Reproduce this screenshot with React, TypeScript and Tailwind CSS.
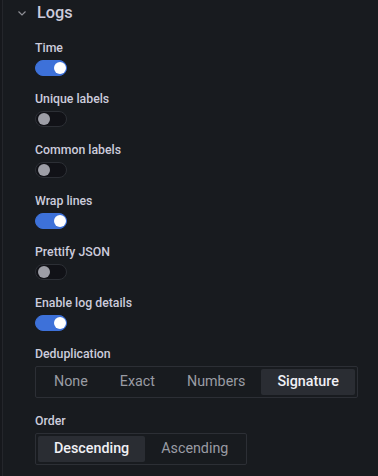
import { useState } from "react";

const DEDUP = ["None", "Exact", "Numbers", "Signature"];
const ORDER = ["Descending", "Ascending"];

export default function App() {
  const [opts, setOpts] = useState({
    time: true,
    unique: false,
    common: false,
    wrap: true,
    prettify: false,
    details: true,
  });
  const [dedup, setDedup] = useState("Signature");
  const [order, setOrder] = useState("Descending");

  const toggle = (k: keyof typeof opts) => setOpts((o) => ({ ...o, [k]: !o[k] }));

  return (
    <div
      className="flex h-[476px] w-[378px] overflow-hidden bg-[#181b1f] text-[#ccccdc]"
      style={{ fontFamily: "Roboto, 'Liberation Sans', sans-serif" }}
    >
      <div className="w-[2px] bg-[#16181c]" />
      <div className="flex-1 border-l border-[#24262b]">
        <div className="mt-[2px] flex h-[22px] items-center pl-[12px]">
          <svg width="14" height="14" viewBox="0 0 14 14" className="text-[#8e8f96]">
            <path d="M3.5 5.5 L7 9 L10.5 5.5" fill="none" stroke="currentColor" strokeWidth="1.2" />
          </svg>
          <span className="ml-[8px] text-[16.3px] font-medium leading-[22px]">Logs</span>
        </div>

        <div className="pl-[32px] pt-[17px]">
          <Field label="Time">
            <Switch on={opts.time} onClick={() => toggle("time")} />
          </Field>
          <Field label="Unique labels">
            <Switch on={opts.unique} onClick={() => toggle("unique")} />
          </Field>
          <Field label="Common labels">
            <Switch on={opts.common} onClick={() => toggle("common")} />
          </Field>
          <Field label="Wrap lines">
            <Switch on={opts.wrap} onClick={() => toggle("wrap")} />
          </Field>
          <Field label="Prettify JSON">
            <Switch on={opts.prettify} onClick={() => toggle("prettify")} />
          </Field>
          <Field label="Enable log details">
            <Switch on={opts.details} onClick={() => toggle("details")} />
          </Field>
          <Field label="Deduplication">
            <Segmented options={DEDUP} value={dedup} onChange={setDedup} />
          </Field>
          <Field label="Order">
            <Segmented options={ORDER} value={order} onChange={setOrder} />
          </Field>
        </div>
      </div>
    </div>
  );
}

function Field({ label, children }: { label: string; children: React.ReactNode }) {
  return (
    <div className="mb-[16px]">
      <label className="block pb-[4px] text-[12.3px] font-medium leading-[15px] text-[#ccccdc]">{label}</label>
      {children}
    </div>
  );
}

function Switch({ on, onClick }: { on: boolean; onClick: () => void }) {
  return (
    <button
      type="button"
      onClick={onClick}
      className={
        on
          ? "relative block h-[16px] w-[32px] rounded-full border border-[#3d71d9] bg-[#3d71d9]"
          : "relative block h-[16px] w-[32px] rounded-full border border-[#2c2f35] bg-[#111217]"
      }
    >
      <span
        className={
          on
            ? "absolute left-[18px] top-[1px] h-[12px] w-[12px] rounded-full bg-white"
            : "absolute left-[2px] top-[1px] h-[12px] w-[12px] rounded-full bg-[#9d9ea6]"
        }
      />
    </button>
  );
}

function Segmented({
  options,
  value,
  onChange,
}: {
  options: string[];
  value: string;
  onChange: (v: string) => void;
}) {
  return (
    <div className="inline-flex h-[32px] rounded-[2px] border border-[#2c2f35] p-[2px]">
      {options.map((o) => (
        <button
          key={o}
          type="button"
          onClick={() => onChange(o)}
          className={
            o === value
              ? "h-[26px] rounded-[2px] bg-[#2a2d33] px-[16px] text-[14.3px] font-medium text-[#f0f0f5]"
              : "h-[26px] rounded-[2px] px-[16px] text-[14.3px] text-[#9a9ca4]"
          }
        >
          {o}
        </button>
      ))}
    </div>
  );
}
